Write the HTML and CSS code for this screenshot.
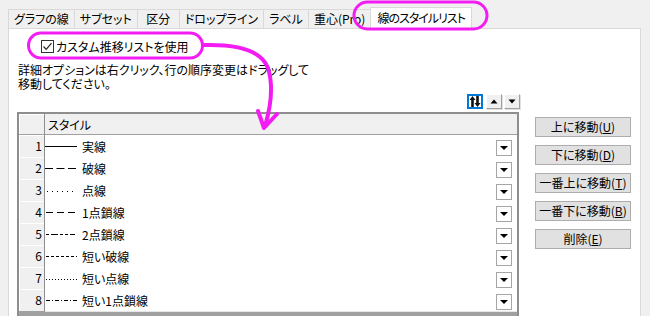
FILE: index.html
```html
<!DOCTYPE html>
<html lang="ja">
<head>
<meta charset="utf-8">
<title>線のスタイルリスト</title>
<link rel="stylesheet" href="styles.css">
</head>
<body>
<div class="page">
  <div class="tabs">
    <div class="tab">グラフの線</div>
    <div class="tab">サブセット</div>
    <div class="tab">区分</div>
    <div class="tab">ドロップライン</div>
    <div class="tab">ラベル</div>
    <div class="tab">重心(Pro)</div>
    <div class="tab active">線のスタイルリスト</div>
  </div>
  <div class="panel">
    <label class="check">
      <span class="box"><svg width="11" height="11" viewBox="0 0 11 11"><path d="M1.5 5.5 L4.2 8.3 L9.5 2.2" fill="none" stroke="#222" stroke-width="1.2"/></svg></span>
      <span class="check-label">カスタム推移リストを使用</span>
    </label>
    <div class="desc">
      <div class="desc-line">詳細オプションは右クリック、行の順序変更はドラッグして</div>
      <div class="desc-line">移動してください。</div>
    </div>
    <div class="toolbar">
      <span class="tool sort"><svg width="12" height="11" viewBox="0 0 12 11"><path d="M3.5 0 L6.5 4 H4.8 V11 H2.2 V4 H0.5 Z" fill="#111"/><path d="M8.5 11 L5.5 7 H7.2 V0 H9.8 V7 H11.5 Z" fill="#111"/></svg></span>
      <span class="tool"><svg width="8" height="5" viewBox="0 0 8 5"><path d="M4 0.5 L7.5 4.5 H0.5 Z" fill="#000"/></svg></span>
      <span class="tool"><svg width="8" height="5" viewBox="0 0 8 5"><path d="M0.5 0.5 H7.5 L4 4.5 Z" fill="#000"/></svg></span>
    </div>
    <div class="main">
      <div class="grid">
        <div class="grow head"><div class="rh"></div><div class="cell">スタイル</div></div>
        <div class="grow"><div class="rh">1</div><div class="cell"><svg class="ls" width="33" height="22"><line x1="0" y1="11.5" x2="32" y2="11.5" stroke="#000"/></svg><span>実線</span><span class="dd"><i></i></span></div></div>
        <div class="grow"><div class="rh">2</div><div class="cell"><svg class="ls" width="33" height="22"><line x1="0" y1="11.5" x2="32" y2="11.5" stroke="#000" stroke-dasharray="8 3.5"/></svg><span>破線</span><span class="dd"><i></i></span></div></div>
        <div class="grow"><div class="rh">3</div><div class="cell"><svg class="ls" width="33" height="22"><line x1="2" y1="12.5" x2="32" y2="12.5" stroke="#000" stroke-dasharray="1 4"/></svg><span>点線</span><span class="dd"><i></i></span></div></div>
        <div class="grow"><div class="rh">4</div><div class="cell"><svg class="ls" width="33" height="22"><line x1="1" y1="11.5" x2="32" y2="11.5" stroke="#000" stroke-dasharray="7 4"/></svg><span>1点鎖線</span><span class="dd"><i></i></span></div></div>
        <div class="grow"><div class="rh">5</div><div class="cell"><svg class="ls" width="33" height="22"><line x1="1" y1="11.5" x2="30" y2="11.5" stroke="#000" stroke-dasharray="3 2 7 2 3 2"/></svg><span>2点鎖線</span><span class="dd"><i></i></span></div></div>
        <div class="grow"><div class="rh">6</div><div class="cell"><svg class="ls" width="33" height="22"><line x1="1" y1="11.5" x2="32" y2="11.5" stroke="#000" stroke-dasharray="3 2"/></svg><span>短い破線</span><span class="dd"><i></i></span></div></div>
        <div class="grow"><div class="rh">7</div><div class="cell"><svg class="ls" width="33" height="22"><line x1="1" y1="12.5" x2="32" y2="12.5" stroke="#000" stroke-dasharray="1 2"/></svg><span>短い点線</span><span class="dd"><i></i></span></div></div>
        <div class="grow"><div class="rh">8</div><div class="cell"><svg class="ls" width="33" height="22"><line x1="1" y1="11.5" x2="32" y2="11.5" stroke="#000" stroke-dasharray="4 2 1 2"/></svg><span>短い1点鎖線</span><span class="dd"><i></i></span></div></div>
      </div>
      <div class="buttons">
        <button class="btn">上に移動(<u>U</u>)</button>
        <button class="btn">下に移動(<u>D</u>)</button>
        <button class="btn">一番上に移動(<u>T</u>)</button>
        <button class="btn">一番下に移動(<u>B</u>)</button>
        <button class="btn">削除(<u>E</u>)</button>
      </div>
    </div>
  </div>
  <svg class="annot" width="650" height="316" viewBox="0 0 650 316">
    <rect x="28.5" y="33" width="174" height="25" rx="12.5" fill="none" stroke="#f31cf3" stroke-width="3"/>
    <rect x="354" y="2" width="133" height="27" rx="13.5" fill="none" stroke="#f31cf3" stroke-width="3"/>
    <path d="M204 45 C240 44 262 52 268 68 C273 84 271 106 265 126" fill="none" stroke="#f31cf3" stroke-width="4" stroke-linecap="round"/>
    <path d="M258 111 L264 128 L277 114" fill="none" stroke="#f31cf3" stroke-width="4" stroke-linecap="round" stroke-linejoin="round"/>
  </svg>
</div>
</body>
</html>
```

FILE: styles.css
```css
* { box-sizing: border-box; }
body {
  margin: 0;
  background: #f0f0f0;
  font-family: "Noto Sans CJK JP", "Noto Sans", sans-serif;
  font-size: 12px;
  color: #000;
  font-feature-settings: "palt";
}
.page {
  position: relative;
  width: 650px;
  height: 316px;
  overflow: hidden;
}
.tabs {
  display: flex;
  padding: 9px 0 0 8px;
  height: 28px;
}
.tab {
  height: 19px;
  min-width: 43px;
  line-height: 17px;
  padding: 0 5px;
  text-align: center;
  border: 1px solid #d9d9d9;
  border-bottom: none;
  margin-right: -1px;
  background: #f0f0f0;
  white-space: nowrap;
}
.tab.active {
  position: relative;
  z-index: 1;
  height: 22px;
  margin-top: -2px;
  line-height: 19px;
  background: #fff;
  padding: 0 6px;
  letter-spacing: -1px;
}
.panel {
  margin-left: 8px;
  width: 633px;
  height: 300px;
  background: #fff;
  border: 1px solid #d9d9d9;
}
.check {
  display: flex;
  align-items: center;
  margin: 11px 0 0 32px;
  height: 13px;
  gap: 2px;
}
.box {
  width: 13px;
  height: 13px;
  border: 1px solid #333;
  background: #fff;
  display: flex;
  align-items: center;
  justify-content: center;
}
.check-label {
  line-height: 13px;
}
.desc {
  margin: 10px 0 0 9px;
}
.desc-line {
  height: 14px;
  line-height: 14px;
}
.toolbar {
  display: flex;
  justify-content: flex-end;
  gap: 2px;
  width: 511px;
  height: 15px;
  margin-top: 3px;
}
.tool {
  width: 16px;
  height: 15px;
  display: flex;
  align-items: center;
  justify-content: center;
  background: #f0f0f0;
  border: 1px solid;
  border-color: #fff #a0a0a0 #a0a0a0 #fff;
  box-shadow: 1px 1px 0 #e0e0e0;
}
.tool.sort {
  background: #fff;
  border: 2px solid #0078d7;
  box-shadow: none;
  margin-right: 1px;
}
.main {
  display: flex;
  gap: 16px;
  margin: 3px 0 0 8px;
}
.grid {
  width: 502px;
  height: 212px;
  border: 2px solid #8e8e8e;
  border-bottom: none;
  background: #a0a0a0;
}
.grow {
  display: grid;
  grid-template-columns: 26px 1fr;
  height: 22px;
}
.grow.head {
  height: 21px;
}
.rh {
  background: #f0f0f0;
  border-right: 1px solid #8e8e8e;
  border-bottom: 1px solid #a0a0a0;
  box-shadow: inset 1px 1px 0 #fff;
  text-align: right;
  padding-right: 2px;
  line-height: 21px;
}
.cell {
  display: flex;
  align-items: center;
  background: #fff;
  border-bottom: 1px solid #e6e6e6;
  white-space: nowrap;
}
.head .cell {
  background: #f0f0f0;
  border-bottom: 1px solid #a0a0a0;
  padding-left: 3px;
}
.ls {
  flex: none;
  margin-right: 4px;
}
.dd {
  margin-left: auto;
  margin-right: 5px;
  margin-top: 3px;
  width: 16px;
  height: 16px;
  border: 1px solid #a6a6a6;
  background: #fff;
  display: flex;
  align-items: center;
  justify-content: center;
}
.dd i {
  width: 0;
  height: 0;
  border-left: 4px solid transparent;
  border-right: 4px solid transparent;
  border-top: 4px solid #000;
}
.buttons {
  display: flex;
  flex-direction: column;
  gap: 8px;
  margin-top: 5px;
}
.btn {
  width: 96px;
  height: 20px;
  padding: 0;
  border: 1px solid #adadad;
  background: #e1e1e1;
  font: inherit;
  font-feature-settings: "palt";
  color: #000;
  line-height: 18px;
}
.annot {
  position: absolute;
  left: 0;
  top: 0;
  pointer-events: none;
  z-index: 5;
}
```
